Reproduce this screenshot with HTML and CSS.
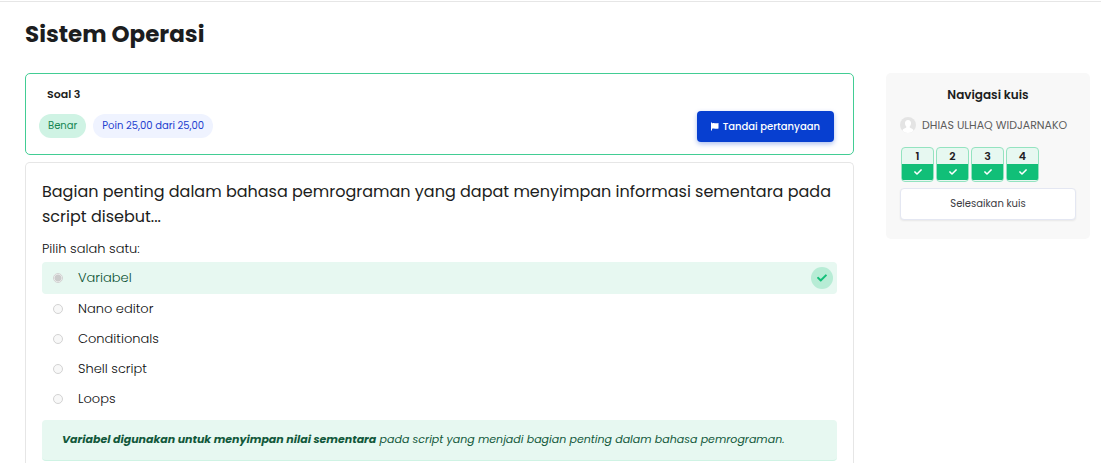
FILE: index.html
```html
<!DOCTYPE html>
<html lang="id">
<head>
<meta charset="utf-8">
<meta name="viewport" content="width=device-width, initial-scale=1">
<title>Sistem Operasi</title>
<link rel="stylesheet" href="styles.css">
</head>
<body>
<svg class="sprite" aria-hidden="true">
  <symbol id="check" viewBox="0 0 512 512"><path d="M174 439 7 273c-10-10-10-27 0-37l37-36c10-10 26-10 36 0l112 112L432 73c10-10 26-10 36 0l37 36c10 10 10 27 0 37L210 439c-10 10-26 10-36 0z"/></symbol>
</svg>
<header class="page-header">
  <h1 class="page-title">Sistem Operasi</h1>
</header>
<div class="layout">
  <main class="content">
    <section class="info">
      <h2 class="info-title">Soal 3</h2>
      <div class="info-row">
        <span class="pill pill-success">Benar</span>
        <span class="pill pill-grade">Poin 25,00 dari 25,00</span>
        <button class="flag-button" type="button">
          <svg class="flag-icon" viewBox="0 0 8 9" aria-hidden="true"><path d="M0 .5h1v8H0zM1 1.500C3 .3 4.500 2 7.500 1V6.500C5 7.500 3.500 5.800 1 6.800z"/></svg>
          Tandai pertanyaan
        </button>
      </div>
    </section>
    <section class="question">
      <p class="question-text">Bagian penting dalam bahasa pemrograman yang dapat menyimpan informasi sementara pada script disebut...</p>
      <fieldset class="answers">
        <legend class="prompt">Pilih salah satu:</legend>
        <div class="answer answer-correct">
          <input class="radio" type="radio" name="answer" id="a1" checked disabled><label for="a1">Variabel</label>
          <span class="correct-mark"><svg class="mark-icon" role="img" aria-label="Benar"><use href="#check"/></svg></span>
        </div>
        <div class="answer"><input class="radio" type="radio" name="answer" id="a2" disabled><label for="a2">Nano editor</label></div>
        <div class="answer"><input class="radio" type="radio" name="answer" id="a3" disabled><label for="a3">Conditionals</label></div>
        <div class="answer"><input class="radio" type="radio" name="answer" id="a4" disabled><label for="a4">Shell script</label></div>
        <div class="answer"><input class="radio" type="radio" name="answer" id="a5" disabled><label for="a5">Loops</label></div>
      </fieldset>
      <p class="feedback"><strong>Variabel digunakan untuk menyimpan nilai sementara</strong> pada script yang menjadi bagian penting dalam bahasa pemrograman.</p>
    </section>
  </main>
  <aside class="quiz-nav">
    <h2 class="nav-title">Navigasi kuis</h2>
    <div class="user">
      <svg class="avatar" viewBox="0 0 16 16" aria-hidden="true"><circle cx="8" cy="8" r="8" fill="#e4e4e4"/><path fill="#fff" d="M8 3C5.700 3 4.800 4.700 5 6.700c.1 1.200.6 2 1.300 2.700v1.100C4.500 11.500 2.800 11.600 2.400 13.700A8 8 0 0 0 13.600 13.700C13.200 11.600 11.500 11.500 9.700 10.500V9.400c.7-.7 1.200-1.500 1.300-2.700C11.200 4.700 10.300 3 8 3z"/></svg>
      <span>DHIAS ULHAQ WIDJARNAKO</span>
    </div>
    <nav class="numbers" aria-label="Navigasi kuis">
      <a class="number" href="#q1"><span class="digit">1</span><span class="state"><svg class="state-icon" aria-hidden="true"><use href="#check"/></svg></span></a>
      <a class="number" href="#q2"><span class="digit">2</span><span class="state"><svg class="state-icon" aria-hidden="true"><use href="#check"/></svg></span></a>
      <a class="number" href="#q3"><span class="digit">3</span><span class="state"><svg class="state-icon" aria-hidden="true"><use href="#check"/></svg></span></a>
      <a class="number" href="#q4"><span class="digit">4</span><span class="state"><svg class="state-icon" aria-hidden="true"><use href="#check"/></svg></span></a>
    </nav>
    <button class="finish" type="button">Selesaikan kuis</button>
  </aside>
</div>
</body>
</html>
```

FILE: styles.css
```css
* { box-sizing: border-box; }

body {
  margin: 0;
  padding-top: 1px;
  min-height: 100vh;
  display: flex;
  flex-direction: column;
  background: #fff;
  color: #1c1d20;
  font: 13px/20px Poppins, Inter, "Open Sans", sans-serif;
}

h1, h2, p { margin: 0; }

button { font-family: inherit; cursor: pointer; }

.sprite { position: absolute; width: 0; height: 0; }

.page-header {
  border-top: 1px solid #e6e6e6;
  padding: 16px 25px 23px;
}

.page-title { font-size: 23px; line-height: 32px; font-weight: 700; }

.layout {
  flex: 1;
  display: grid;
  grid-template-columns: minmax(0, 1fr) 204px;
  gap: 32px;
  padding: 0 11px 0 25px;
}

.content { display: flex; flex-direction: column; gap: 7px; }

.info {
  border: 1px solid #42cd94;
  border-radius: 5px;
  padding: 10px 19px 12px 13px;
}

.info-title { padding-left: 8px; font-size: 11px; line-height: 20px; font-weight: 600; }

.info-row { display: flex; align-items: center; gap: 7px; padding-top: 7px; }

.pill {
  margin-bottom: 1px;
  padding: 0 9px;
  border-radius: 12px;
  font-size: 10px;
  line-height: 24px;
}

.pill-success { background: #cff3e4; color: #168753; }
.pill-grade { background: #eff3ff; color: #2340cf; }

.flag-button {
  display: flex;
  align-items: center;
  gap: 4px;
  height: 31px;
  margin-left: auto;
  padding: 0 14px;
  border: 0;
  border-radius: 4px;
  background: #073fd0;
  color: #fff;
  font-size: 10px;
  font-weight: 500;
  box-shadow: 0 2px 5px #073fd055;
}

.flag-icon { width: 8px; height: 9px; fill: currentColor; }

.question {
  flex: 1;
  border: 1px solid #e6e6e6;
  border-bottom: 0;
  border-radius: 5px 5px 0 0;
  padding: 16px 16px 2px;
}

.question-text { font-size: 16px; line-height: 25px; }

.answers { border: 0; margin: 0; padding: 0; min-width: 0; color: #0d0e10; font-weight: 300; }

.prompt { padding: 10px 0 3px; }

.answer { display: flex; align-items: center; gap: 15px; height: 30px; padding: 0 4px 0 11px; }

.answer-correct { height: 32px; border-radius: 4px; background: #e7f8f1; color: #0b5232; }

.radio {
  appearance: none;
  width: 10px;
  height: 10px;
  margin: 0;
  border: 1px solid #d3d3d3;
  border-radius: 50%;
  background: #f8f8f8;
}

.radio:checked { background: radial-gradient(circle, #cbcbcb 0 3px, #f8f8f8 4px); }

.correct-mark {
  display: flex;
  align-items: center;
  justify-content: center;
  width: 22px;
  height: 22px;
  margin-left: auto;
  border-radius: 50%;
  background: #b7ecd5;
}

.mark-icon { width: 10px; height: 10px; fill: #11bf78; }

.feedback {
  margin-top: 6px;
  padding: 9px 20px 11px;
  border-bottom: 1px solid #cff3e4;
  border-radius: 4px;
  background: #e7f8f1;
  color: #12593b;
  font-size: 11px;
  font-style: italic;
}

.feedback strong { font-weight: 700; }

.quiz-nav {
  align-self: start;
  padding: 12px 14px 18px;
  border-radius: 5px;
  background: #f8f8f8;
}

.nav-title { font-size: 12px; line-height: 20px; font-weight: 600; text-align: center; }

.user {
  display: flex;
  align-items: center;
  gap: 6px;
  padding-top: 10px;
  color: #5c5c5c;
  font-size: 11px;
  white-space: nowrap;
}

.avatar { flex: none; width: 16px; height: 16px; }

.numbers { display: flex; gap: 2px; padding: 12px 1px 6px; }

.number {
  width: 33px;
  padding-bottom: 1px;
  overflow: hidden;
  border: 1px solid #94e3c0;
  border-radius: 4px;
  background: #e7f8f1;
  color: #1f2024;
  font-size: 11px;
  font-weight: 600;
  text-align: center;
  text-decoration: none;
}

.digit { display: block; line-height: 16px; }

.state { display: flex; align-items: center; justify-content: center; height: 16px; background: #11bf78; }

.state-icon { width: 8px; height: 8px; fill: #fff; }

.finish {
  width: 100%;
  height: 32px;
  margin-bottom: 1px;
  border: 1px solid #e4e7f2;
  border-radius: 4px;
  background: #fff;
  color: #3b3b3f;
  font-size: 10px;
  font-weight: 400;
  box-shadow: 0 1px 2px #00000012;
}
```
